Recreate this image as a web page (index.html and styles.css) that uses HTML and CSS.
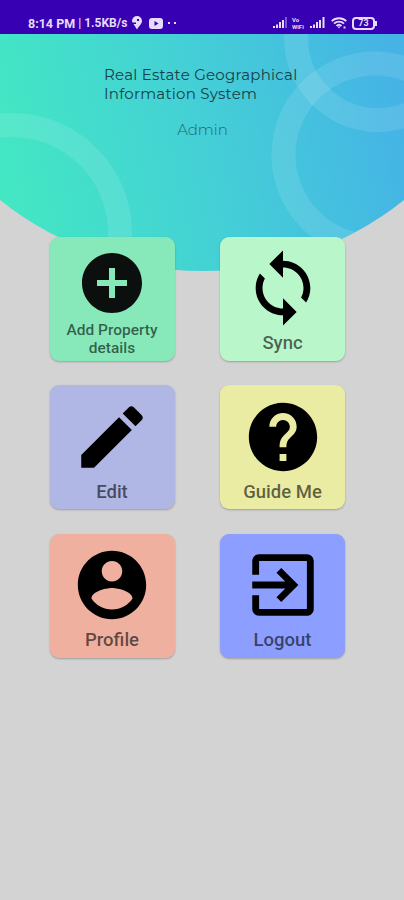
FILE: index.html
```html
<!DOCTYPE html>
<html lang="en">
<head>
  <meta charset="UTF-8" />
  <meta name="viewport" content="width=device-width, initial-scale=1" />
  <title>Real Estate Geographical Information System</title>
  <link rel="stylesheet" href="styles.css">
</head>
<body>
  <div class="status-bar">
    <span class="clock">8:14 PM</span>
    <span class="speed">| 1.5KB/s</span>
    <svg class="pin" width="10" height="14" viewBox="0 0 10 14"><path d="M5 0a5 5 0 0 0-5 5c0 1 .5 1.500 1.500 1.500H4V8H1.500L5 13.500C7 10 10 8 10 5a5 5 0 0 0-5-5zM5 3h2v2H5z" fill-rule="evenodd"/></svg>
    <svg class="video" width="14" height="11" viewBox="0 0 14 11"><path fill-rule="evenodd" d="M3 0h8a3 3 0 0 1 3 3v5a3 3 0 0 1-3 3H3a3 3 0 0 1-3-3V3a3 3 0 0 1 3-3zm2.500 3v5L9.500 5.500z"/></svg>
    <span class="dots"><i></i><i></i></span>
    <div class="status-right">
      <svg width="14" height="12" viewBox="0 0 14 12"><path d="M0 9h2v2H0zM3 7.500h2V11H3zM6 5h2v6H6zM9 3h2v8H9z"/><path opacity=".4" d="M12 0h2v11h-2z"/></svg>
      <span class="volte"><span>Vo</span><span>WiFi</span></span>
      <svg width="15" height="12" viewBox="0 0 15 12"><path d="M0 9h2v2H0zM3 7.500h2V11H3zM6 5h2v6H6zM9 3h2v8H9zM12.500 0h2v11h-2z"/></svg>
      <svg class="wifi" width="16" height="12" viewBox="0 0 16 12"><g fill="none" stroke="#e6dcfa" stroke-width="1.800"><path d="M.7 4.200a10.500 10.500 0 0 1 14.600 0M3 6.700a7 7 0 0 1 10 0M5.500 9a3.600 3.600 0 0 1 5 0"/></g><path d="M6.500 9.500h3L8 11.500zM12.500 9.500h2v2h-2z"/></svg>
      <span class="battery">73</span>
    </div>
  </div>

  <div class="header">
    <svg class="header-bg" width="404" height="237" viewBox="0 34 404 237">
      <defs>
        <linearGradient id="sea" gradientUnits="userSpaceOnUse" x1="0" y1="190" x2="404" y2="105">
          <stop offset="0" stop-color="#43e8c3"/>
          <stop offset=".5" stop-color="#44d0d6"/>
          <stop offset="1" stop-color="#45b3e6"/>
        </linearGradient>
        <clipPath id="dome"><circle cx="202" cy="-52" r="323"/></clipPath>
      </defs>
      <g clip-path="url(#dome)">
        <rect y="34" width="404" height="237" fill="url(#sea)"/>
        <g fill="none" stroke="#fff" stroke-opacity=".11" stroke-width="24">
          <circle cx="12" cy="233" r="108"/>
          <circle cx="375" cy="155" r="91.500"/>
          <circle cx="378" cy="38" r="82"/>
        </g>
      </g>
    </svg>
    <h1>Real Estate Geographical<br>Information System</h1>
    <p class="role">Admin</p>
  </div>

  <div class="menu">
    <div class="card add">
      <svg width="72" height="72" viewBox="0 0 24 24"><path d="M12 2C6.480 2 2 6.480 2 12s4.480 10 10 10 10-4.480 10-10S17.520 2 12 2zm5 11h-4v4h-2v-4H7v-2h4V7h2v4h4v2z"/></svg>
      <span>Add Property<br>details</span>
    </div>
    <div class="card sync">
      <svg width="82" height="82" viewBox="0 0 24 24"><path d="M12 4V1L8 5l4 4V6c3.310 0 6 2.690 6 6 0 1.010-.25 1.970-.7 2.800l1.460 1.460C19.540 15.030 20 13.570 20 12c0-4.420-3.580-8-8-8zm0 14c-3.310 0-6-2.690-6-6 0-1.010.25-1.970.7-2.800L5.240 7.740C4.460 8.970 4 10.430 4 12c0 4.420 3.580 8 8 8v3l4-4-4-4v3z"/></svg>
      <span>Sync</span>
    </div>
    <div class="card edit">
      <svg width="82" height="82" viewBox="0 0 24 24"><path d="M3 17.250V21h3.750L17.810 9.940l-3.750-3.750L3 17.250zM20.710 7.040c.39-.39.39-1.020 0-1.410l-2.340-2.340c-.39-.39-1.020-.39-1.410 0l-1.830 1.830 3.750 3.750 1.830-1.830z"/></svg>
      <span>Edit</span>
    </div>
    <div class="card guide">
      <svg width="82" height="82" viewBox="0 0 24 24"><path d="M12 2C6.480 2 2 6.480 2 12s4.480 10 10 10 10-4.480 10-10S17.520 2 12 2zm1 17h-2v-2h2v2zm2.070-7.750l-.9.920C13.450 12.900 13 13.500 13 15h-2v-.5c0-1.100.45-2.100 1.170-2.830l1.240-1.260c.37-.36.59-.86.59-1.410 0-1.100-.9-2-2-2s-2 .9-2 2H8c0-2.210 1.790-4 4-4s4 1.790 4 4c0 .88-.36 1.680-.93 2.250z"/></svg>
      <span>Guide Me</span>
    </div>
    <div class="card profile">
      <svg width="82" height="82" viewBox="0 0 24 24"><path d="M12 2C6.480 2 2 6.480 2 12s4.480 10 10 10 10-4.480 10-10S17.520 2 12 2zm0 3c1.660 0 3 1.340 3 3s-1.340 3-3 3-3-1.340-3-3 1.340-3 3-3zm0 14.200c-2.500 0-4.710-1.280-6-3.220.03-1.990 4-3.080 6-3.080 1.990 0 5.970 1.090 6 3.080-1.290 1.940-3.500 3.220-6 3.220z"/></svg>
      <span>Profile</span>
    </div>
    <div class="card logout">
      <svg width="82" height="82" viewBox="0 0 24 24"><path d="M10.090 15.590L11.500 17l5-5-5-5-1.410 1.410L12.670 11H3v2h9.670l-2.580 2.590zM19 3H5c-1.110 0-2 .9-2 2v4h2V5h14v14H5v-4H3v4c0 1.100.89 2 2 2h14c1.100 0 2-.9 2-2V5c0-1.100-.9-2-2-2z"/></svg>
      <span>Logout</span>
    </div>
  </div>
</body>
</html>
```
FILE: styles.css
```css
body {
  margin: 0;
  min-height: 900px;
  background: #d3d3d3;
  font-family: Roboto, Arial, sans-serif;
}
.status-bar {
  box-sizing: border-box;
  height: 34px;
  padding: 12px 26px 0 28px;
  background: #3700b3;
  color: #e6dcfa;
  display: flex;
  align-items: center;
  font-size: 12.5px;
  font-weight: 700;
  white-space: nowrap;
}
.status-bar svg {
  fill: #e6dcfa;
  flex: none;
}
.speed {
  margin-left: 3px;
  font-size: 12px;
}
.pin {
  margin-left: 5px;
}
.video {
  margin-left: 7px;
}
.dots {
  display: flex;
  gap: 4px;
  margin-left: 5px;
}
.dots i {
  width: 2px;
  height: 2px;
  background: #e6dcfa;
}
.status-right {
  display: flex;
  align-items: center;
  margin-left: auto;
}
.volte {
  display: flex;
  flex-direction: column;
  width: 14px;
  margin: 0 4px 0 5px;
  font-size: 6px;
  line-height: 7px;
}
.wifi {
  margin: 0 5px 0 6px;
}
.battery {
  position: relative;
  box-sizing: border-box;
  width: 23px;
  height: 13px;
  margin-right: 3px;
  border: 2px solid #e6dcfa;
  border-radius: 4px;
  font-size: 9px;
  line-height: 9px;
  text-align: center;
}
.battery::after {
  content: "";
  position: absolute;
  right: -4px;
  top: 2px;
  width: 2px;
  height: 5px;
  background: #e6dcfa;
}
.header {
  position: relative;
  height: 202.500px;
}
.header-bg {
  position: absolute;
  top: 0;
  left: 0;
}
.header h1 {
  position: relative;
  margin: 0 0 0 104px;
  padding-top: 31px;
  font-family: Montserrat, Inter, sans-serif;
  font-size: 15px;
  font-weight: 400;
  line-height: 19px;
  letter-spacing: 0.25px;
  color: #173f48;
  white-space: nowrap;
}
.role {
  position: relative;
  margin: 17px 0 0 1px;
  text-align: center;
  font-family: Montserrat, Inter, sans-serif;
  font-size: 15px;
  font-weight: 300;
  line-height: 19px;
  color: #28636e;
}
/* two columns of square cards */
.menu {
  position: relative;
  display: grid;
  grid-template-columns: 125px 125px;
  grid-auto-rows: 124px;
  gap: 24.500px 45.500px;
  padding-left: 49.500px;
}
.card {
  display: flex;
  flex-direction: column;
  align-items: center;
  box-sizing: border-box;
  padding-top: 10.500px;
  border-radius: 9px;
  box-shadow: 0 1px 2px rgba(0,0,0,0.25);
  color: rgba(0,0,0,0.6);
  font-size: 18.500px;
  font-weight: 500;
  line-height: 22px;
  text-align: center;
}
.card span {
  margin-top: 3px;
}
.add {
  background: #87e9b9;
  font-size: 15.500px;
  line-height: 18px;
}
.add span {
  margin-top: 2px;
}
.add svg {
  fill: #0b0f0d;
}
.sync {
  background: #b9f6ca;
}
.edit {
  background: #b1b7e5;
}
.guide {
  background: #ebeca3;
}
.profile {
  background: #efb0a0;
}
.logout {
  background: #8c9eff;
}
```
